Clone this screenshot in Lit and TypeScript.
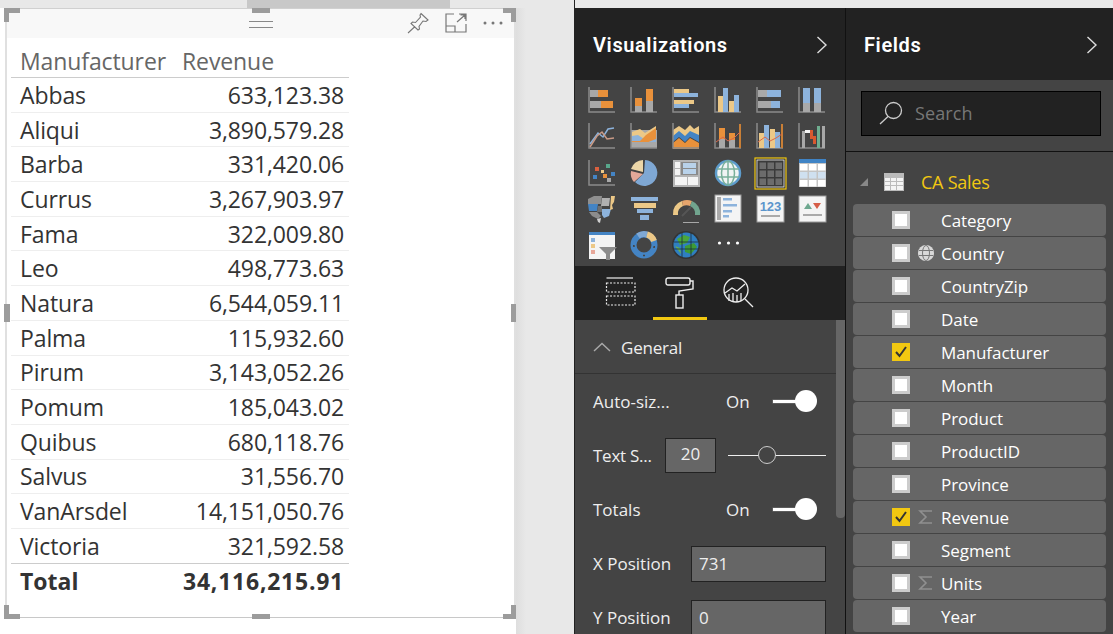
import { LitElement, html, css, svg } from "lit";
import { customElement } from "lit/decorators.js";

const O = "#e9913b", G = "#a8a8a8", L = "#8db3dc", T = "#ecc887", B = "#4484c4", A = "#8a8a8a", W = "#f4f4f4";
const r = (x: number, y: number, w: number, h: number, f: string) => svg`<rect x=${x} y=${y} width=${w} height=${h} fill=${f}></rect>`;
const axes = svg`<path d="M1 1V26H27" fill="none" stroke=${A} stroke-width="1.5"></path>`;
const p = (d: string, f: string) => svg`<path d=${d} fill=${f}></path>`;
const l = (d: string, s: string, w = 1.5) => svg`<path d=${d} fill="none" stroke=${s} stroke-width=${w}></path>`;

const ICONS = [
  svg`${axes}${r(2, 4, 8, 7, G)}${r(10, 4, 10, 7, O)}${r(2, 15, 11, 7, G)}${r(13, 15, 12, 7, O)}`,
  svg`${axes}${r(5, 12, 7, 8, O)}${r(5, 20, 7, 6, G)}${r(16, 3, 7, 12, O)}${r(16, 15, 7, 11, G)}`,
  svg`${axes}${r(2, 3, 15, 4, T)}${r(2, 7, 24, 4, L)}${r(2, 14, 20, 4, T)}${r(2, 18, 15, 4, L)}`,
  svg`${axes}${r(4, 10, 5, 16, T)}${r(9, 2, 5, 24, L)}${r(15, 15, 5, 11, T)}${r(20, 9, 5, 17, L)}`,
  svg`${axes}${r(2, 4, 9, 7, G)}${r(11, 4, 14, 7, L)}${r(2, 15, 13, 7, G)}${r(15, 15, 9, 7, L)}`,
  svg`${axes}${r(5, 2, 7, 15, L)}${r(5, 17, 7, 9, G)}${r(16, 2, 7, 15, L)}${r(16, 17, 7, 9, G)}`,
  svg`${axes}${l("M2 22L10 11L15 15L20 7L26 6", L)}${l("M2 25L9 14L14 10L19 17L26 16", "#c99a86")}`,
  svg`${r(1, 8, 26, 18, G)}${p("M2 10L10 7L15 11L26 4V25H2Z", T)}${p("M2 14L8 13L14 17L26 12V25H2Z", L)}${p("M2 19L10 19L16 13L26 6V17L16 21L2 25Z", O)}${r(2, 20, 24, 5, G)}${axes}`,
  svg`${p("M1 8L7 4L13 8L18 3L22 7L27 4V14H1Z", T)}${p("M1 14L7 9L13 14L18 9L27 13V20L18 15L13 20L7 15L1 20Z", B)}${p("M1 21L7 16L13 21L18 16L27 21V27H1Z", O)}${axes}`,
  svg`${axes}${r(5, 6, 6, 11, O)}${r(5, 17, 6, 9, G)}${r(15, 11, 6, 7, O)}${r(15, 18, 6, 8, G)}${r(25, 2, 2, 24, "#c97f36")}${l("M2 20L9 15L14 19L20 16L26 10", "#d9684a", 1)}`,
  svg`${axes}${r(3, 11, 5, 15, T)}${r(8, 3, 5, 23, L)}${r(14, 7, 5, 19, T)}${r(19, 10, 5, 16, L)}${r(25, 2, 2, 24, "#c97f36")}${l("M2 20L9 15L14 19L20 16L26 12", "#d9684a", 1)}`,
  svg`${axes}${r(4, 9, 3, 17, G)}${r(7, 8, 5, 3, W)}${r(12, 8, 3, 9, "#d9592f")}${r(15, 14, 3, 8, "#d9592f")}${r(19, 4, 3, 22, "#6fae90")}${r(24, 4, 3, 22, G)}`,
  svg`${axes}${p("M7 8h4v4H7z", "#d9603f")}${p("M18 5h4v4h-4z", "#58a88c")}${p("M13 11h3v3h-3z", T)}${p("M5 16h4v4H5z", B)}${p("M15 15h4v4h-4z", O)}${p("M23 13h4v4h-4z", B)}${p("M19 19h4v4h-4z", G)}`,
  svg`${p("M14 14L15 1A13 13 0 1 1 5 23Z", "#7fa8d4")}${p("M13 13V1A13 13 0 0 0 1 10Z", "#ecd6a8")}${p("M13 15L1 12A13 13 0 0 0 4 23Z", "#e2a899")}`,
  svg`${r(1, 1, 27, 27, "#b5b5b5")}${r(3, 3, 5, 6, W)}${r(3, 10, 5, 6, W)}${r(9, 3, 17, 13, "#8a8a8a")}${r(11, 4, 13, 5, "#b9d2ea")}${r(11, 10, 13, 5, "#b9d2ea")}${r(3, 18, 12, 8, W)}${r(16, 18, 10, 8, W)}`,
  svg`<circle cx="14" cy="14" r="12" fill="#f0f4f4" stroke="#5d9ccc" stroke-width="2.5"></circle>${l("M3 10H25M3 18H25M14 3V25", "#79b09a")}<ellipse cx="14" cy="14" rx="6.5" ry="12" fill="none" stroke="#79b09a" stroke-width="1.5"></ellipse>`,
  svg`<rect x="-1" y="-1" width="31" height="31" fill="#333" stroke="#f2c811" stroke-width="1.2"></rect><rect x="1" y="1" width="27" height="27" fill="#3a3a3a" stroke="#eee" stroke-width=".8"></rect>${[3.5, 11.5, 19.5].flatMap((x) => [3.5, 11.5, 19.5].map((y) => r(x, y, 6.5, 6.5, "#6c6c6c")))}`,
  svg`${r(1, 0, 27, 28, "#c4c4c4")}${r(1, 0, 27, 4, "#3f83c5")}${[2, 11, 20].flatMap((x) => [5, 13, 21].map((y) => r(x, y, 7.5, 6.5, y === 13 ? "#cfe0f0" : "#fff")))}`,
  svg`${p("M0 4L6 1H14L13 9H0Z", "#8f8f8f")}${p("M14 3H22L21 11L13 11Z", "#b0b0b0")}${p("M0 9H10L9 16H1Z", B)}${p("M10 11H14V17H9Z", "#6f6f6f")}${p("M14 14H23L21 21L16 23L14 20Z", L)}${p("M1 17H9L13 21L10 24L4 21Z", "#8c8c8c")}${p("M9 24L13 23L12 28L10 27Z", "#cfcfcf")}${p("M23 1H27L26 7L24 10L25 14L22 15Z", T)}`,
  svg`${r(1, 2, 27, 4, L)}${r(4, 8, 22, 5, T)}${r(7, 14, 16, 4, L)}${r(10, 20, 9, 5, L)}`,
  svg`${p("M1 20A13 13 0 0 1 10 6L11 11A8 8 0 0 0 6 20Z", T)}${p("M10 6A13 13 0 0 1 20 6L18 11A8 8 0 0 0 11 11Z", "#e6a56c")}${p("M20 6A13 13 0 0 1 28 20H23A8 8 0 0 0 18 11Z", "#71a48e")}${l("M10 21L19 12", "#555", 2)}${r(11, 27, 16, 1, G)}`,
  svg`${r(1, 0, 26, 27, "#f4f4f4")}<rect x="1" y="0" width="26" height="27" fill="none" stroke="#999"></rect>${r(3, 2, 4, 23, "#aaa")}${r(9, 3, 9, 2.5, L)}${r(9, 9, 14, 2.5, L)}${r(9, 15, 9, 2.5, L)}${r(9, 20, 6, 2.5, L)}`,
  svg`${r(1, 1, 27, 26, "#f4f4f4")}<rect x="1" y="1" width="27" height="26" fill="none" stroke="#999"></rect><text x="14.5" y="16" font-size="13" font-weight="700" text-anchor="middle" fill="#5b95cc" font-family="Liberation Sans">123</text>${r(5, 20, 19, 2, "#aaa")}`,
  svg`${r(1, 1, 27, 26, "#f4f4f4")}<rect x="1" y="1" width="27" height="26" fill="none" stroke="#999"></rect>${p("M6 14L10 8L14 14Z", "#6ea88f")}${p("M15 8H23L19 14Z", "#d65e48")}${r(5, 19, 19, 2, "#aaa")}`,
  svg`${r(1, 1, 26, 27, "#f4f4f4")}${r(1, 1, 26, 3, B)}${r(3, 7, 4, 4, L)}${r(3, 13, 4, 4, T)}${r(3, 19, 4, 4, "#e7a799")}${p("M11 16H29L22 23V29H18V23Z", "#8c8c8c")}`,
  svg`<circle cx="14" cy="14" r="10.5" fill="none" stroke=${B} stroke-width="6"></circle><path d="M8 5A10.5 10.5 0 0 1 17 3.5" fill="none" stroke="#7fa8d4" stroke-width="6"></path><path d="M17 3.5A10.5 10.5 0 0 1 24 10" fill="none" stroke=${T} stroke-width="6"></path><path d="M13 24.5l2 0M4 16l-.2-2M24 17l.3-2" stroke="#444" stroke-width="1.6"></path>`,
  svg`<circle cx="14" cy="14" r="14" fill="#333"></circle><circle cx="14" cy="14" r="12.5" fill="#2f7fc1"></circle>${p("M5 8L12 4L18 6L15 12L8 14Z", "#4aa63c")}${p("M13 15L22 12L25 16L19 23L13 21Z", "#3d9b36")}${p("M3 15L8 17L9 23Z", "#6ab04b")}${l("M2 11H26M2 18H26M10 2V26M19 2V26", "#1d2d3a", .8)}`,
  svg`${[5.5, 14.5, 23.5].map((x) => svg`<circle cx=${x} cy="12" r="1.6" fill="#fff"></circle>`)}`,
];

const ROWS = [["Abbas", "633,123.38"], ["Aliqui", "3,890,579.28"], ["Barba", "331,420.06"], ["Currus", "3,267,903.97"], ["Fama", "322,009.80"], ["Leo", "498,773.63"], ["Natura", "6,544,059.11"], ["Palma", "115,932.60"], ["Pirum", "3,143,052.26"], ["Pomum", "185,043.02"], ["Quibus", "680,118.76"], ["Salvus", "31,556.70"], ["VanArsdel", "14,151,050.76"], ["Victoria", "321,592.58"]];
const FIELDS: [string, boolean, string][] = [["Category", false, ""], ["Country", false, "globe"], ["CountryZip", false, ""], ["Date", false, ""], ["Manufacturer", true, ""], ["Month", false, ""], ["Product", false, ""], ["ProductID", false, ""], ["Province", false, ""], ["Revenue", true, "sum"], ["Segment", false, ""], ["Units", false, "sum"], ["Year", false, ""]];
const HANDLES = ["tl-h", "tl-v", "tc", "tr-h", "tr-v", "ml", "mr", "bl-h", "bl-v", "bc", "br-h", "br-v"];

@customElement("app-root")
export class AppRoot extends LitElement {
  static styles = css`
    :host { display: block; width: 1113px; height: 634px; overflow: hidden; background: #fff; font-family: "Open Sans", "Liberation Sans", sans-serif; }
    .page { display: grid; grid-template-columns: 574px 271px 268px; height: 634px; overflow: hidden; }
    .canvas { position: relative; height: 634px; overflow: hidden; background: #fff; }
    .topbar { height: 8px; background: #e8e8e8; display: flex; padding-left: 247px; }
    .topbar i { display: block; width: 203px; background: #c8c8c8; }
    .rgutter { position: absolute; left: 516px; top: 8px; width: 58px; height: 626px; background: linear-gradient(90deg, #dedede, #e8e8e8 10px); }
    .visual { position: absolute; left: 5px; top: 8px; width: 511px; height: 610px; box-sizing: border-box; background: #fff; border-style: solid; border-width: 1px 2px; border-color: #d0d0d0 #e0e0e0 #c8c8c8; }
    .vhead { height: 29px; background: #f8f8f8; display: flex; align-items: center; justify-content: center; }
    .tools { position: absolute; right: 10px; top: 3px; display: flex; gap: 15px; align-items: center; }
    .tools svg { display: block; }
    .grip { width: 24px; height: 7px; border-top: 1.5px solid #888; border-bottom: 1.5px solid #888; box-sizing: border-box; margin-top: 1px; }
    .h { position: absolute; background: #9c9c9c; }
    .tl-h, .bl-h { left: 4px; width: 16px; height: 5px; }
    .tl-v, .bl-v { left: 4px; width: 5px; height: 14px; }
    .tr-h, .br-h { left: 503px; width: 13px; height: 5px; }
    .tr-v, .br-v { left: 511px; width: 5px; height: 14px; }
    .tl-h, .tl-v, .tr-h, .tr-v, .tc { top: 8px; }
    .tc, .bc { left: 252px; width: 18px; height: 5px; }
    .bl-h, .br-h, .bc { top: 614px; }
    .bl-v, .br-v { top: 605px; }
    .ml, .mr { top: 304px; width: 6px; height: 18px; }
    .ml { left: 4px; }
    .mr { left: 511px; width: 5px; }
    table { border-collapse: collapse; margin: 7px 0 0 4px; width: 338px; table-layout: fixed; color: #333; font-size: 23px; letter-spacing: -.1px; }
    th { font-weight: 400; color: #666; text-align: left; height: 31px; padding: 0 0 0 9px; border-bottom: 1px solid #ccc; }
    th + th { padding-left: 12px; }
    td { height: 33.7px; padding: 0 5px 0 9px; border-bottom: 1px solid #eee; line-height: 30px; }
    td.n { text-align: right; }
    tr:nth-child(14) td { border-bottom-color: #ccc; }
    .tot td { font-weight: 700; border: 0; padding-top: 1px; letter-spacing: 0; }
    .tot td.n { letter-spacing: .75px; padding-right: 5px; }
    .panel { background: #444; height: 634px; display: flex; flex-direction: column; overflow: hidden; position: relative; }
    .panel.v { border-left: 1px solid #222; box-sizing: border-box; }
    .panel.f .body { border-left: 1px solid #111; }
    .body { display: flex; flex-direction: column; flex: 1; min-height: 0; }
    .cap { height: 8px; background: #e8e8e8; flex: none; }
    .head { height: 72px; flex: none; background: #222; color: #fff; display: flex; align-items: center; justify-content: space-between; padding: 2px 15px 0 18px; box-sizing: border-box; font-size: 20px; font-weight: 600; font-family: Roboto, sans-serif; letter-spacing: .6px; }
    .v .head { padding-right: 17px; }
    .icons { flex: none; height: 186px; box-sizing: border-box; padding: 6px 0 0 13px; display: grid; grid-template-columns: repeat(6, 27px); column-gap: 15px; grid-auto-rows: 28px; row-gap: 8.3px; }
    .icons svg { display: block; overflow: visible; }
    .tabs { flex: none; height: 54px; background: #222; display: flex; padding-left: 16px; }
    .tab { width: 60px; display: flex; justify-content: center; padding-top: 11px; box-sizing: border-box; height: 54px; }
    .tab.on { width: 54px; border-bottom: 3px solid #f2c811; margin: 0 2px; }
    .sec { flex: none; height: 54px; border-bottom: 1px solid #333; display: flex; align-items: center; gap: 10px; padding: 1px 0 0 18px; color: #eee; font-size: 17px; box-sizing: border-box; letter-spacing: -.2px; }
    .thumb { position: absolute; left: 261px; top: 320px; width: 9px; height: 198px; background: #666; border-radius: 0 0 4px 4px; }
    .form { padding: 0 0 0 18px; color: #eee; font-size: 17px; display: flex; flex-direction: column; }
    .fr { display: flex; align-items: center; height: 54px; }
    .fr .lb { width: 133px; flex: none; }
    .fr.wide .lb { width: 98px; padding-bottom: 2px; }
    .fr.wide { position: relative; top: 1px; }
    .onv { width: 47px; flex: none; }
    .sw { position: relative; width: 44px; height: 22px; }
    .sw::before { content: ""; position: absolute; left: 0; top: 10px; width: 30px; height: 3px; background: #fff; box-shadow: 0 0 0 .5px #777; }
    .sw::after { content: ""; position: absolute; right: 0; top: 0; width: 22px; height: 22px; border-radius: 50%; background: #fff; }
    .numbox { flex: none; width: 51px; height: 35px; box-sizing: border-box; background: #666; border: 1px solid #222; color: #eee; display: flex; align-items: center; justify-content: center; padding-bottom: 3px; }
    .fr.short .lb { width: 72px; letter-spacing: -.25px; }
    .slider { position: relative; flex: none; width: 98px; height: 1px; margin-left: 12px; background: #eee; }
    .slider::after { content: ""; position: absolute; left: 30px; top: -9px; width: 18px; height: 18px; box-sizing: border-box; border-radius: 50%; border: 1px solid #ccc; background: #444; }
    .inp { flex: none; width: 135px; height: 36px; box-sizing: border-box; background: #666; border: 1px solid #222; color: #eee; padding: 0 0 2px 7px; display: flex; align-items: center; }
    .searchwrap { flex: none; height: 72px; box-sizing: border-box; padding: 11px 12px 0 15px; border-bottom: 1px solid #111; background: #444; }
    .search { height: 45px; box-sizing: border-box; background: #222; border: 1px solid #000; display: flex; align-items: center; gap: 12px; padding: 0 0 2px 17px; color: #777; font-size: 18px; letter-spacing: .1px; }
    .table-h { flex: none; height: 52px; display: flex; align-items: center; padding: 7px 0 0 14px; box-sizing: border-box; color: #f2c811; font-size: 18px; letter-spacing: -.25px; gap: 16px; }
    .tri { width: 0; height: 0; border-style: solid; border-width: 0 0 8px 8px; border-color: transparent transparent #888 transparent; }
    .ca { margin-left: 1px; }
    .fields { display: flex; flex-direction: column; gap: 1px; padding: 0 7px; }
    .field { height: 32px; flex: none; background: #666; border-radius: 4px; display: flex; align-items: center; padding-left: 39px; color: #fff; font-size: 17px; letter-spacing: -.06px; box-sizing: border-box; }
    .cb { flex: none; width: 18px; height: 18px; box-sizing: border-box; background: #fff; border: 3px solid #ccc; display: flex; align-items: center; justify-content: center; }
    .cb.ck { background: #f2c811; border: 0; }
    .fi { flex: none; width: 31px; display: flex; justify-content: center; padding-left: 1px; box-sizing: border-box; }
    .fi span { width: 16px; height: 16px; display: block; }
  `;

  render() {
    const chev = html`<svg width="12" height="18" viewBox="0 0 12 18" fill="none" stroke="#ddd" stroke-width="1.400"><path d="M1.500 1L10 9L1.500 17"></path></svg>`;
    return html`<div class="page">
      <div class="canvas">
        <div class="topbar"><i></i></div>
        <div class="rgutter"></div>
        <div class="visual">
          <div class="vhead"><div class="grip"></div></div>
          <div class="tools">
            <svg width="24" height="22" viewBox="0 0 24 22" fill="none" stroke="#777" stroke-width="1.100"><path d="M15 1.500L22 8L20 9.500L17 9L13 14.500L13.500 17L12 18L5 11.500L6.500 10L9.500 10.500L14.500 5L14 3ZM9 14.500L2 21"></path></svg>
            <svg width="22" height="20" viewBox="0 0 22 20" fill="none" stroke="#777" stroke-width="1.200"><path d="M1 8V1H9M14 1H21V8M1 8V19H21V11M1 13H10V19M12 9L20 2M15.500 2H20V6"></path></svg>
            <svg width="22" height="6" viewBox="0 0 22 6" fill="#777"><circle cx="3" cy="3" r="1.500"></circle><circle cx="11" cy="3" r="1.500"></circle><circle cx="19" cy="3" r="1.500"></circle></svg>
          </div>
          <table>
            <colgroup><col style="width:159px" /><col style="width:179px" /></colgroup>
            <thead><tr><th>Manufacturer</th><th>Revenue</th></tr></thead>
            <tbody>
              ${ROWS.map((x) => html`<tr><td>${x[0]}</td><td class="n">${x[1]}</td></tr>`)}
              <tr class="tot"><td>Total</td><td class="n">34,116,215.91</td></tr>
            </tbody>
          </table>
        </div>
        ${HANDLES.map((c) => html`<div class="h ${c}"></div>`)}
      </div>

      <div class="panel v">
        <div class="cap"></div>
        <div class="head"><span>Visualizations</span>${chev}</div>
        <div class="icons">
          ${ICONS.map((i) => html`<svg width="28" height="28" viewBox="0 0 28 28">${i}</svg>`)}
        </div>
        <div class="tabs">
          <div class="tab"><svg width="32" height="30" viewBox="0 0 32 30" fill="none" stroke="#eee"><path d="M1.500 1H28" stroke-width="1.200"></path><path d="M1.500 6H30V15H1.500ZM1.500 19H30V28H1.500Z" stroke-dasharray="2 1.500" stroke-width="1.200"></path></svg></div>
          <div class="tab on"><svg width="30" height="32" viewBox="0 0 30 32" fill="none" stroke="#eee" stroke-width="1.400"><rect x="1" y="1" width="24" height="7" rx="2"></rect><path d="M25 4H28V12L14 14V18"></path><rect x="11" y="18" width="7" height="13"></rect></svg></div>
          <div class="tab"><svg width="32" height="32" viewBox="0 0 32 32" fill="none" stroke="#eee" stroke-width="1.300"><circle cx="13" cy="13" r="12"></circle><path d="M22 22L30 30"></path><path d="M2 16L9 11L14 14L22 7M6 17V24M10 16V25M14 18V25M18 16V24"></path></svg></div>
        </div>
        <div class="sec"><svg width="18" height="10" viewBox="0 0 18 10" fill="none" stroke="#aaa" stroke-width="1.400"><path d="M1 9L9 1.500L17 9"></path></svg><span>General</span></div>
        <div class="form">
          <div class="fr"><span class="lb">Auto-siz...</span><span class="onv">On</span><div class="sw"></div></div>
          <div class="fr short"><span class="lb">Text S...</span><div class="numbox">20</div><div class="slider"></div></div>
          <div class="fr"><span class="lb">Totals</span><span class="onv">On</span><div class="sw"></div></div>
          <div class="fr wide"><span class="lb">X Position</span><div class="inp">731</div></div>
          <div class="fr wide"><span class="lb">Y Position</span><div class="inp">0</div></div>
        </div>
        <div class="thumb"></div>
      </div>

      <div class="panel f">
        <div class="cap"></div>
        <div class="body">
          <div class="head"><span>Fields</span>${chev}</div>
          <div class="searchwrap"><div class="search"><svg width="24" height="24" viewBox="0 0 24 24" fill="none" stroke="#ccc" stroke-width="1.300"><circle cx="14.500" cy="9.500" r="8"></circle><path d="M9 15.500L1 23"></path></svg><span>Search</span></div></div>
          <div class="table-h"><span class="tri"></span><svg width="20" height="18" viewBox="0 0 20 18"><rect width="20" height="18" fill="#bbb"></rect><path d="M1 5h5v3H1zM7 5h5v3H7zM13 5h6v3h-6zM1 9h5v3H1zM7 9h5v3H7zM13 9h6v3h-6zM1 13h5v4H1zM7 13h5v4H7zM13 13h6v4h-6z" fill="#f4f4f4"></path></svg><span class="ca">CA Sales</span></div>
          <div class="fields">
            ${FIELDS.map(([n, c, ic]) => html`<div class="field">
              <div class="cb ${c ? "ck" : ""}">${c ? html`<svg width="14" height="14" viewBox="0 0 14 14" fill="none" stroke="#333" stroke-width="2"><path d="M2 7L5.500 11L12 2"></path></svg>` : ""}</div>
              <div class="fi">${ic === "globe" ? html`<svg width="18" height="18" viewBox="0 0 18 18" fill="#d8d8d8" stroke="#777" stroke-width="1"><circle cx="9" cy="9" r="8" stroke="none"></circle><path d="M2 6.500H16M2 11.500H16" fill="none"></path><ellipse cx="9" cy="9" rx="3.500" ry="7.500" fill="none"></ellipse></svg>` : ic === "sum" ? html`<svg width="16" height="16" viewBox="0 0 16 16" fill="none" stroke="#909090" stroke-width="1.600"><path d="M14 2H2L8 8L2 14H14"></path></svg>` : html`<span></span>`}</div>
              <span>${n}</span>
            </div>`)}
          </div>
        </div>
      </div>
    </div>`;
  }
}
